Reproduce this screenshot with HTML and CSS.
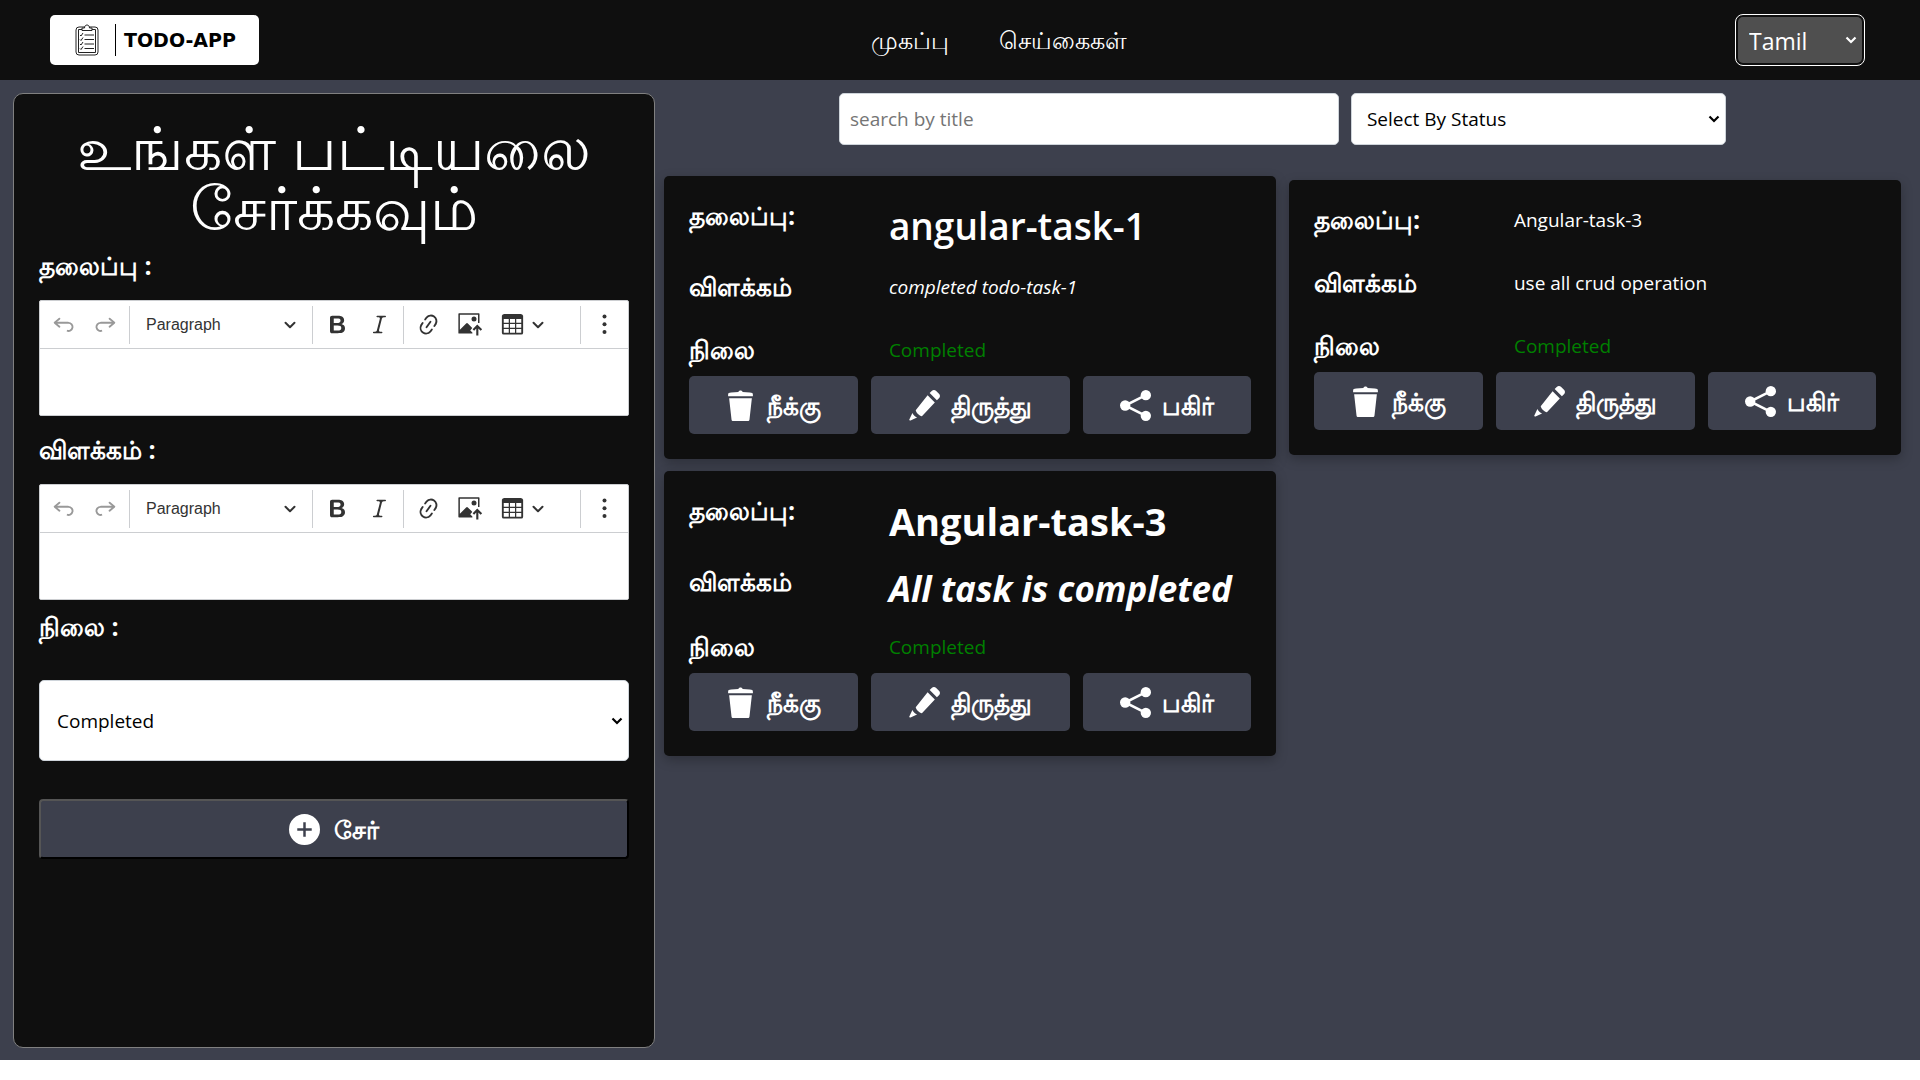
FILE: index.html
```html
<!DOCTYPE html>
<html lang="ta">
<head>
<meta charset="utf-8">
<meta name="viewport" content="width=device-width, initial-scale=1">
<title>Todo App</title>
<link rel="stylesheet" href="styles.css">
</head>
<body>
<svg class="sprite" aria-hidden="true">
  <symbol id="undo" viewBox="0 0 20 20"><path d="m5.042 9.367 2.189 1.837a.75.75 0 0 1-.965 1.149l-3.788-3.18a.747.747 0 0 1-.21-.284.75.75 0 0 1 .17-.945L6.23 4.762a.75.75 0 1 1 .964 1.15L4.863 7.866h8.917A.75.75 0 0 1 14 7.9a4 4 0 1 1-1.477 7.718l.344-1.489a2.5 2.5 0 1 0 1.094-4.73l.008-.032H5.042z"/></symbol>
  <symbol id="redo" viewBox="0 0 20 20"><path d="m14.958 9.367-2.189 1.837a.75.75 0 0 0 .965 1.149l3.788-3.18a.747.747 0 0 0 .21-.284.75.75 0 0 0-.17-.945L13.77 4.762a.75.75 0 1 0-.964 1.15l2.331 1.955H6.22A.75.75 0 0 0 6 7.9a4 4 0 1 0 1.477 7.718l-.344-1.489A2.5 2.5 0 1 1 6.039 9.4l-.008-.032h8.927z"/></symbol>
  <symbol id="bold" viewBox="0 0 20 20"><path d="M10.187 17H5.773c-.637 0-1.092-.138-1.364-.415-.273-.277-.409-.718-.409-1.323V4.738c0-.617.14-1.062.419-1.332.279-.27.73-.406 1.354-.406h4.68c.69 0 1.288.041 1.793.124.506.083.96.242 1.36.478.341.197.644.447.906.75a3.262 3.262 0 0 1 .808 2.162c0 1.401-.722 2.426-2.167 3.075C15.05 10.175 16 11.315 16 13.01a3.756 3.756 0 0 1-2.296 3.504 6.1 6.1 0 0 1-1.517.377c-.571.073-1.238.11-2 .11zm-.217-6.217H7v4.087h3.069c1.977 0 2.965-.69 2.965-2.072 0-.707-.256-1.22-.768-1.537-.512-.319-1.277-.478-2.296-.478zM7 5.13v3.619h2.606c.729 0 1.292-.067 1.69-.2a1.6 1.6 0 0 0 .91-.765c.165-.267.247-.566.247-.897 0-.707-.26-1.176-.778-1.409-.519-.232-1.31-.348-2.375-.348H7z"/></symbol>
  <symbol id="italic" viewBox="0 0 20 20"><path d="m9.586 14.633.021.004c-.036.335.095.655.393.962.082.083.173.15.274.201h1.474a.6.6 0 1 1 0 1.2H5.304a.6.6 0 0 1 0-1.2h1.15c.474-.07.809-.182 1.005-.334.157-.122.291-.32.404-.597l2.416-9.55a1.053 1.053 0 0 0-.281-.823 1.12 1.12 0 0 0-.442-.296H8.15a.6.6 0 0 1 0-1.2h6.443a.6.6 0 1 1 0 1.2h-1.195c-.376.056-.65.155-.823.296-.215.175-.423.439-.623.79l-2.366 9.347z"/></symbol>
  <symbol id="link" viewBox="0 0 20 20"><path d="m11.077 15 .991-1.416a.75.75 0 1 1 1.229.86l-1.148 1.64a.748.748 0 0 1-.217.206 5.251 5.251 0 0 1-8.503-5.955.741.741 0 0 1 .12-.274l1.147-1.639a.75.75 0 1 1 1.228.86L4.933 10.7l.006.003a3.75 3.75 0 0 0 6.132 4.294l.006.004zm5.494-5.335a.748.748 0 0 1-.12.274l-1.147 1.639a.75.75 0 1 1-1.228-.86l.86-1.23a3.75 3.75 0 0 0-6.144-4.301l-.86 1.229a.75.75 0 0 1-1.229-.86l1.148-1.64a.748.748 0 0 1 .217-.206 5.251 5.251 0 0 1 8.503 5.955zm-4.563-2.532a.75.75 0 0 1 .184 1.045l-3.155 4.505a.75.75 0 1 1-1.229-.86l3.155-4.506a.75.75 0 0 1 1.045-.184z"/></symbol>
  <symbol id="image" viewBox="0 0 20 20"><path d="M.8 1h15.900a.5.5 0 0 1 .5.5v7.200h-1.200V2.200H1.500v12l5-5a1 1 0 0 1 1.400 0l3.100 3.100.400.500-1.600 1.900 1.700 1.700v.800H.8a.5.5 0 0 1-.5-.5V1.500A.5.5 0 0 1 .8 1z"/><circle cx="12.800" cy="5.600" r="2"/><path d="M14.600 18.800v-5.600l-1.700 1.800-1.200-1.200 3.700-3.800 3.900 3.800-1.200 1.200-1.800-1.800v5.600z"/></symbol>
  <symbol id="table" viewBox="0 0 20 20"><path d="M3 5.500v3h4v-3H3zm0 4v3h4v-3H3zm0 4v3h4v-3H3zm5 3h4v-3H8v3zm5 0h4v-3h-4v3zm4-4v-3h-4v3h4zm0-4v-3h-4v3h4zm1.500 8A1.500 1.500 0 0 1 17 18H3a1.500 1.500 0 0 1-1.500-1.500V3c.222-.863 1.068-1.500 2-1.500h13c.932 0 1.778.637 2 1.500v13.500zM12 12.500v-3H8v3h4zm0-4v-3H8v3h4z"/></symbol>
  <symbol id="caret" viewBox="0 0 12 12"><path d="M1.500 3.800 6 8.300l4.500-4.500" fill="none" stroke="currentColor" stroke-width="2" stroke-linecap="round" stroke-linejoin="round"/></symbol>
  <symbol id="dots" viewBox="0 0 20 20"><circle cx="10" cy="3.500" r="1.600"/><circle cx="10" cy="9.800" r="1.600"/><circle cx="10" cy="16" r="1.600"/></symbol>
  <symbol id="trash" viewBox="0 0 30 30"><path d="M3 4.500C3 3 4 2.600 6 2.500L13 2c.300-2 3.700-2 4 0l7 .500c2 .100 3 .500 3 2V6H3zM4 8h22l-2.300 20.500c-.100 1-.700 1.500-1.700 1.500H8c-1 0-1.600-.5-1.700-1.500z"/></symbol>
  <symbol id="pencil" viewBox="0 0 30 30"><path d="m20 3 2-2c1.300-1.300 3-1.300 4.300 0L29 3.700c1.300 1.300 1.300 3 0 4.300l-2 2zM18 5l7 7L12.500 25.500c-2.500-.600-5.500-3.600-6-6zM3.300 22.200c1 2 2.600 3.600 4.500 4.500L1.500 29.500c-1 .300-1.400-.200-1.200-1z"/></symbol>
  <symbol id="share" viewBox="0 0 30 30"><path d="M25 5 5 15l20 10" fill="none" stroke="currentColor" stroke-width="2.500"/><circle cx="25" cy="5" r="5"/><circle cx="5" cy="15" r="5"/><circle cx="25" cy="25" r="5"/></symbol>
  <symbol id="plus" viewBox="0 0 30 30"><path fill-rule="evenodd" d="M15 0a15 15 0 1 1 0 30 15 15 0 0 1 0-30zm-1.200 8v5.800H8v2.400h5.800V22h2.400v-5.800H22v-2.400h-5.800V8z"/></symbol>
</svg>

<header class="navbar">
  <a class="logo" href="#" aria-label="TODO-APP">
    <svg class="logo-mark" viewBox="0 0 24 32" fill="none" stroke="#222" aria-hidden="true">
      <rect x="1" y="3" width="22" height="28" rx="3"/>
      <path d="M7 5.500H3.500v23h17v-23H17"/>
      <path d="M7 6.500V4h2.500c0-4 5-4 5 0H17v2.500z" fill="#fff"/>
      <path d="m5 11 1 1 2-3M9.500 11H19M5 15.500l1 1 2-3M9.500 15.500H19M5 20l1 1 2-3M9.500 20H19M5 24.500l1 1 2-3M9.500 24.500H19"/>
    </svg>
    <span class="logo-text">TODO-APP</span>
  </a>
  <nav class="nav-links">
    <a href="#">முகப்பு</a>
    <a href="#">செய்கைகள்</a>
  </nav>
  <select class="language" aria-label="Language"><option>Tamil</option><option>English</option></select>
</header>

<main class="page">
  <form class="panel">
    <h1 class="panel-title">உங்கள் பட்டியலை சேர்க்கவும்</h1>

    <label class="field-label" for="title-input">தலைப்பு :</label>
    <div class="editor">
      <div class="toolbar">
        <button class="tool" type="button" aria-label="Undo" disabled><svg><use href="#undo"/></svg></button>
        <button class="tool" type="button" aria-label="Redo" disabled><svg><use href="#redo"/></svg></button>
        <span class="separator"></span>
        <button class="tool-heading" type="button">Paragraph<svg class="caret"><use href="#caret"/></svg></button>
        <span class="separator"></span>
        <button class="tool" type="button" aria-label="Bold"><svg><use href="#bold"/></svg></button>
        <button class="tool" type="button" aria-label="Italic"><svg><use href="#italic"/></svg></button>
        <span class="separator"></span>
        <button class="tool" type="button" aria-label="Link"><svg><use href="#link"/></svg></button>
        <button class="tool" type="button" aria-label="Image"><svg><use href="#image"/></svg></button>
        <button class="tool tool-menu" type="button" aria-label="Table"><svg><use href="#table"/></svg><svg class="caret"><use href="#caret"/></svg></button>
        <span class="separator separator-end"></span>
        <button class="tool" type="button" aria-label="More"><svg><use href="#dots"/></svg></button>
      </div>
      <textarea class="editor-text" id="title-input"></textarea>
    </div>

    <label class="field-label" for="description-input">விளக்கம் :</label>
    <div class="editor editor-last">
      <div class="toolbar">
        <button class="tool" type="button" aria-label="Undo" disabled><svg><use href="#undo"/></svg></button>
        <button class="tool" type="button" aria-label="Redo" disabled><svg><use href="#redo"/></svg></button>
        <span class="separator"></span>
        <button class="tool-heading" type="button">Paragraph<svg class="caret"><use href="#caret"/></svg></button>
        <span class="separator"></span>
        <button class="tool" type="button" aria-label="Bold"><svg><use href="#bold"/></svg></button>
        <button class="tool" type="button" aria-label="Italic"><svg><use href="#italic"/></svg></button>
        <span class="separator"></span>
        <button class="tool" type="button" aria-label="Link"><svg><use href="#link"/></svg></button>
        <button class="tool" type="button" aria-label="Image"><svg><use href="#image"/></svg></button>
        <button class="tool tool-menu" type="button" aria-label="Table"><svg><use href="#table"/></svg><svg class="caret"><use href="#caret"/></svg></button>
        <span class="separator separator-end"></span>
        <button class="tool" type="button" aria-label="More"><svg><use href="#dots"/></svg></button>
      </div>
      <textarea class="editor-text" id="description-input"></textarea>
    </div>

    <label class="field-label status-label" for="status-input">நிலை :</label>
    <select class="status-select" id="status-input"><option>Completed</option><option>Pending</option></select>
    <button class="add" type="submit"><svg><use href="#plus"/></svg>சேர்</button>
  </form>

  <section class="tasks">
    <div class="filters">
      <input class="search" type="text" placeholder="search by title" aria-label="search by title">
      <select class="filter" aria-label="Select By Status"><option>Select By Status</option><option>Completed</option></select>
    </div>

    <div class="cards">
      <article class="card">
        <dl class="details">
          <dt>தலைப்பு:</dt><dd class="heading semibold">angular-task-1</dd>
          <dt>விளக்கம்</dt><dd class="italic">completed todo-task-1</dd>
          <dt class="last">நிலை</dt><dd class="last done">Completed</dd>
        </dl>
        <div class="actions">
          <button type="button"><svg><use href="#trash"/></svg>நீக்கு</button>
          <button type="button"><svg><use href="#pencil"/></svg>திருத்து</button>
          <button type="button"><svg><use href="#share"/></svg>பகிர்</button>
        </div>
      </article>

      <article class="card">
        <dl class="details">
          <dt>தலைப்பு:</dt><dd>Angular-task-3</dd>
          <dt>விளக்கம்</dt><dd>use all crud operation</dd>
          <dt class="last">நிலை</dt><dd class="last done">Completed</dd>
        </dl>
        <div class="actions">
          <button type="button"><svg><use href="#trash"/></svg>நீக்கு</button>
          <button type="button"><svg><use href="#pencil"/></svg>திருத்து</button>
          <button type="button"><svg><use href="#share"/></svg>பகிர்</button>
        </div>
      </article>

      <article class="card">
        <dl class="details">
          <dt>தலைப்பு:</dt><dd class="heading">Angular-task-3</dd>
          <dt>விளக்கம்</dt><dd class="subheading italic">All task is completed</dd>
          <dt class="last">நிலை</dt><dd class="last done">Completed</dd>
        </dl>
        <div class="actions">
          <button type="button"><svg><use href="#trash"/></svg>நீக்கு</button>
          <button type="button"><svg><use href="#pencil"/></svg>திருத்து</button>
          <button type="button"><svg><use href="#share"/></svg>பகிர்</button>
        </div>
      </article>
    </div>
  </section>
</main>
</body>
</html>
```
FILE: styles.css
```css
* { box-sizing: border-box; }

body {
  margin: 0;
  background: #fff;
  color: #fff;
  font: 19px/32px "Open Sans", "Noto Sans", sans-serif;
}

button, input, select, textarea { font: inherit; }
button { cursor: pointer; }
svg { display: block; flex: none; fill: currentColor; }
.sprite { display: none; }

/* Drop-downs share one chevron */
select {
  appearance: none;
  background: #fff url("data:image/svg+xml,%3Csvg xmlns='http://www.w3.org/2000/svg' viewBox='0 0 12 12'%3E%3Cpath d='M1.500 3.500 6 8l4.500-4.500' fill='none' stroke='black' stroke-width='2.200'/%3E%3C/svg%3E") no-repeat right 5px center / 12px 12px;
}

/* Navigation */
.navbar {
  display: flex;
  align-items: center;
  justify-content: space-between;
  min-height: 80px;
  padding: 0 58px 0 50px;
  background: #0f0f0f;
}
.logo {
  display: flex;
  align-items: center;
  width: 209px;
  height: 50px;
  padding-left: 25px;
  border-radius: 5px;
  background: #fff;
  color: #000;
  text-decoration: none;
}
.logo-mark { width: 24px; height: 32px; fill: none; }
.logo-text {
  margin-left: 16px;
  padding-left: 8px;
  border-left: 1px solid #000;
  font: bold 19px/32px "DejaVu Sans", sans-serif;
}
.nav-links { display: flex; gap: 50px; font-size: 24px; }
.nav-links a { color: #fff; text-decoration: none; }
.language {
  width: 124px;
  height: 46px;
  padding: 2px 24px 0 11px;
  border: 0;
  border-radius: 5px;
  outline: 1px solid #fff;
  outline-offset: 2px;
  background-color: #4f4f4f;
  background-image: url("data:image/svg+xml,%3Csvg xmlns='http://www.w3.org/2000/svg' viewBox='0 0 12 12'%3E%3Cpath d='M1.500 3.500 6 8l4.500-4.500' fill='none' stroke='white' stroke-width='2.200'/%3E%3C/svg%3E");
  color: #fff;
  font-size: 23px;
}

/* Page */
.page {
  display: flex;
  gap: 9px;
  min-height: calc(100vh - 100px);
  padding: 13px 19px 12px 13px;
  background: #3d404d;
}
.panel {
  flex: 0 0 34%;
  padding: 23px 25px 24px;
  border: 1px solid #808080;
  border-radius: 10px;
  background: #0f0f0f;
}
.panel-title {
  margin: 0 0 14px;
  font-size: 60px;
  line-height: 60px;
  font-weight: 400;
  text-align: center;
}
.field-label {
  display: block;
  margin-bottom: 20px;
  font-size: 25px;
  line-height: 29px;
  font-weight: 700;
}
.editor {
  margin-bottom: 19px;
  overflow: hidden;
  border: 1px solid #ccced1;
  border-radius: 2px;
  background: #fff;
}
.editor-last { margin-bottom: 12px; }
.toolbar {
  display: flex;
  align-items: center;
  gap: 2px;
  height: 48px;
  padding: 0 3px;
  border-bottom: 1px solid #ccced1;
}
.tool, .tool-heading {
  display: flex;
  align-items: center;
  justify-content: center;
  flex: none;
  width: 40px;
  height: 38px;
  padding: 0;
  border: 0;
  background: none;
  color: #333;
}
.tool:disabled { color: #999; }
.tool svg { width: 25px; height: 25px; }
.tool-menu { width: 60px; gap: 7px; }
.tool .caret, .tool-heading .caret { width: 12px; height: 12px; }
.tool-heading {
  justify-content: space-between;
  width: 174px;
  padding: 0 12px;
  font: 16px/24px "Liberation Sans", Arial, sans-serif;
}
.separator { flex: none; width: 1px; height: 38px; margin: 0 2px; background: #ccced1; }
.separator-end { margin-left: auto; }
.editor-text {
  display: block;
  width: 100%;
  height: 66px;
  padding: 8px 12px;
  border: 0;
  resize: none;
  color: #333;
}
.status-label { margin-bottom: 39px; }
.status-select {
  display: block;
  width: 100%;
  height: 81px;
  margin-bottom: 38px;
  padding: 0 24px 0 17px;
  border: 1px solid #ced4da;
  border-radius: 5px;
  color: #000;
}
.add {
  display: flex;
  align-items: center;
  justify-content: center;
  gap: 14px;
  width: 100%;
  height: 60px;
  border: 2px outset #555;
  border-color: #555 #000 #000 #555;
  border-radius: 4px;
  background: #3d404d;
  color: #fff;
  font-size: 25px;
  font-weight: 700;
}
.add svg, .actions svg { width: 31px; height: 31px; }

/* Tasks */
.tasks { flex: 1; min-width: 0; }
.filters {
  display: grid;
  grid-template-columns: 4fr 3fr;
  gap: 12px;
  max-width: 887px;
  margin: 0 auto 31px;
}
.search, .filter {
  width: 100%;
  height: 52px;
  border: 1px solid #ced4da;
  border-radius: 5px;
  color: #000;
}
.search { padding: 0 10px; background: #fff; }
.search::placeholder { color: #757575; }
.filter { padding: 0 24px 0 15px; }
.cards {
  display: grid;
  grid-template-columns: 1fr 1fr;
  align-items: center;
  gap: 12px 13px;
}
.card {
  padding: 24px 25px 25px;
  border-radius: 5px;
  background: #0f0f0f;
  box-shadow: 0 4px 12px rgba(0, 0, 0, .25);
}
.details {
  display: grid;
  grid-template-columns: 200px 1fr;
  margin: 0;
}
.details dt { min-height: 63px; font-size: 25px; line-height: 30px; font-weight: 700; }
.details dd { margin: 0; }
.details .last { min-height: 42px; }
.details .done { color: #008000; }
.details .heading {
  padding-bottom: 19px;
  font-size: 38px;
  line-height: 52px;
  font-weight: 700;
}
.details .semibold { font-size: 37px; font-weight: 600; }
.details .italic { font-style: italic; }
.details .subheading {
  padding-bottom: 19px;
  font-size: 35px;
  line-height: 46px;
  font-weight: 700;
}
.actions {
  display: grid;
  grid-template-columns: 169fr 199fr 168fr;
  gap: 13px;
}
.actions button {
  display: flex;
  align-items: center;
  justify-content: center;
  gap: 11px;
  height: 58px;
  padding: 0;
  border: 0;
  border-radius: 5px;
  background: #3d404d;
  color: #fff;
  font-size: 25px;
  font-weight: 700;
}
```
